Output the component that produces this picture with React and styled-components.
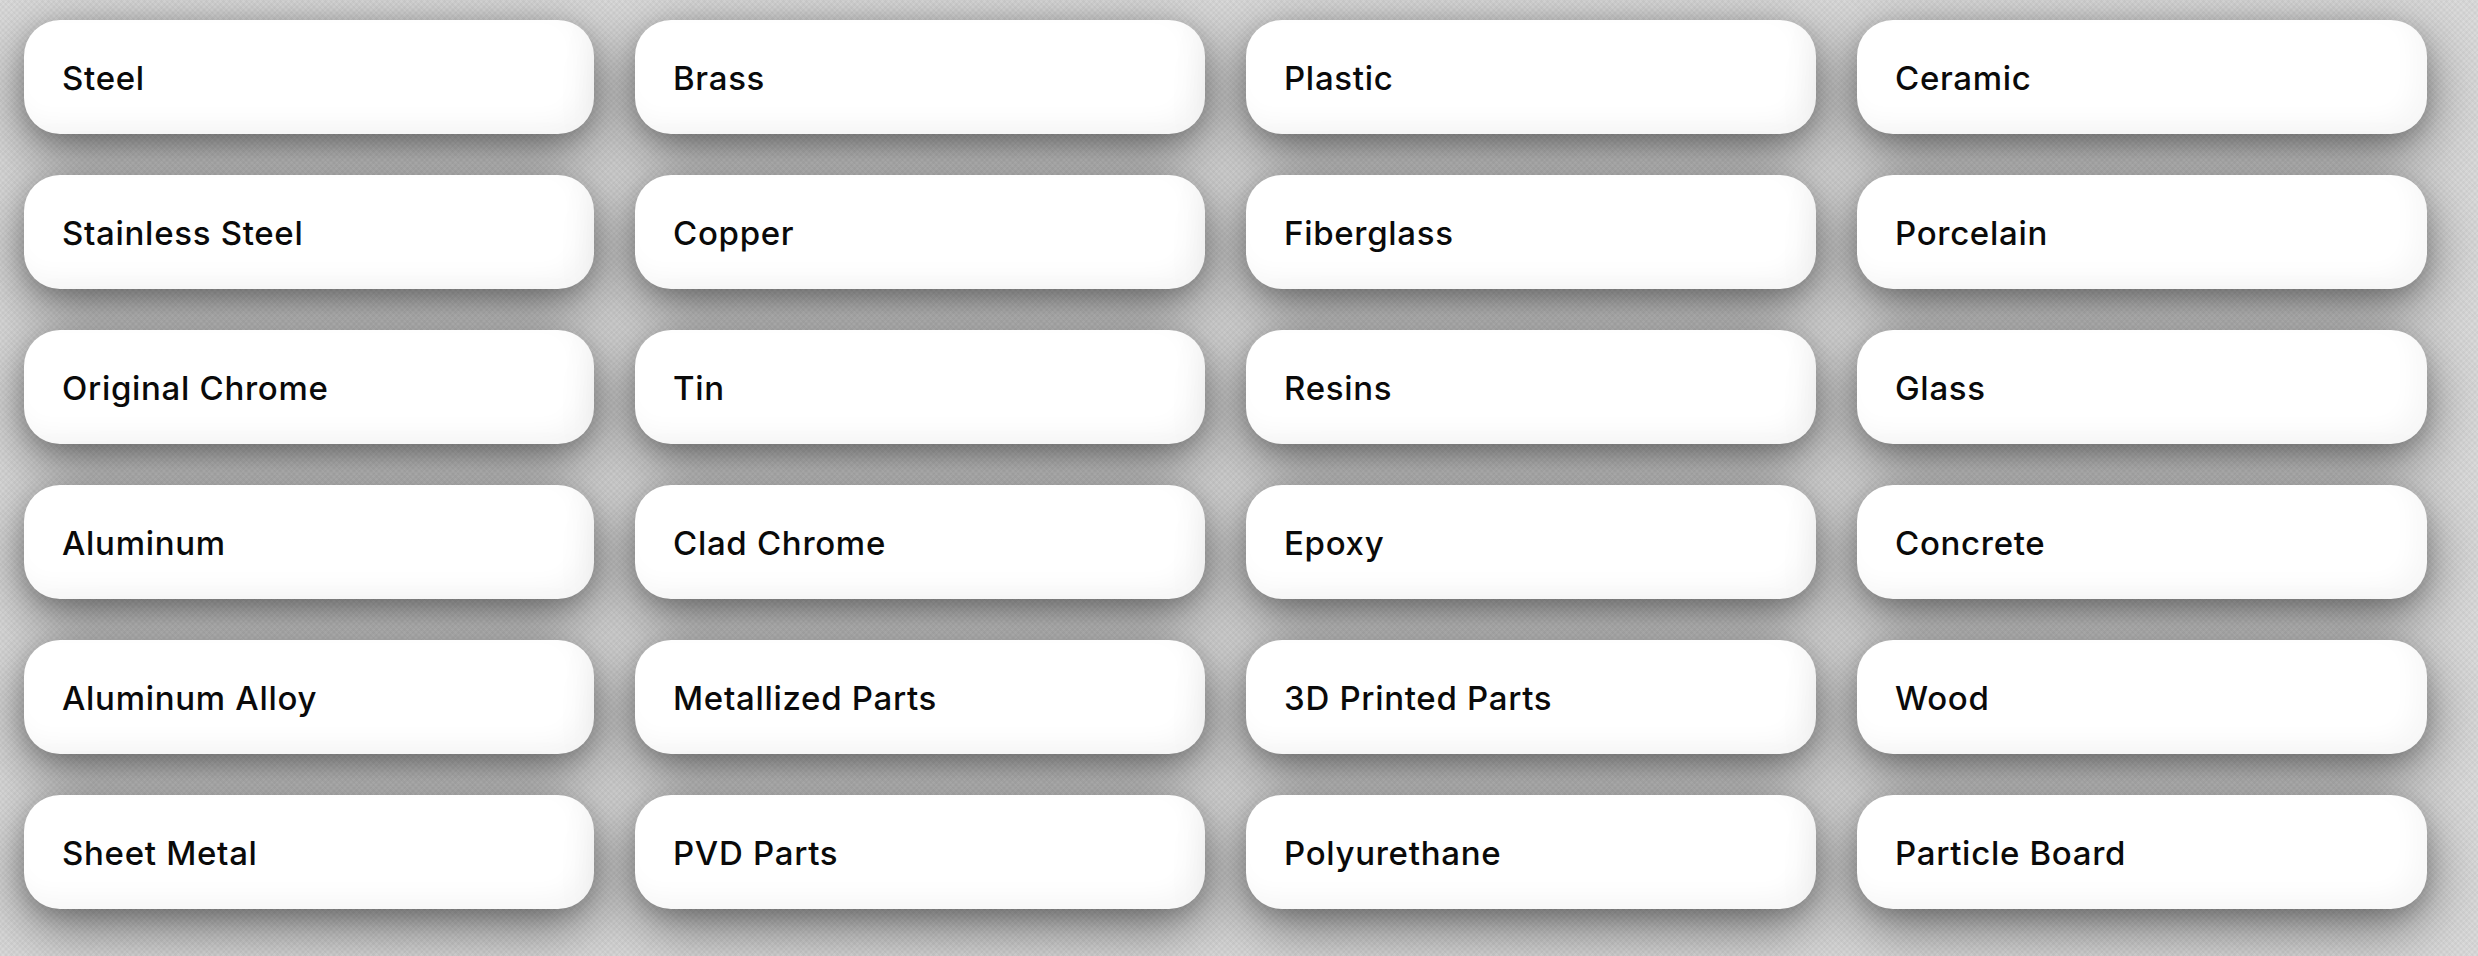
import React from "react";
import styled, { createGlobalStyle } from "styled-components";

const Global = createGlobalStyle`
  html, body {
    margin: 0;
    padding: 0;
    width: 2478px;
    height: 956px;
    overflow: hidden;
  }
  body {
    background-color: #dcdcdc;
    background-image:
      repeating-linear-gradient(45deg, rgba(0,0,0,0.028) 0 2px, transparent 2px 4px),
      repeating-linear-gradient(-45deg, rgba(0,0,0,0.028) 0 2px, transparent 2px 4px);
    font-family: Inter, "Noto Sans", sans-serif;
  }
`;

const Page = styled.div`
  box-sizing: border-box;
  width: 2478px;
  height: 956px;
  padding: 20px 51px 0 24px;
`;

const Grid = styled.div`
  display: grid;
  grid-template-columns: repeat(4, 570px);
  grid-auto-rows: 114px;
  column-gap: 41px;
  row-gap: 41px;
`;

const Card = styled.div`
  box-sizing: border-box;
  display: flex;
  align-items: center;
  padding: 3px 0 0 38px;
  border-radius: 36px;
  background: #ffffff;
  box-shadow:
    inset -12px -12px 24px rgba(0, 0, 0, 0.035),
    0 18px 60px rgba(0, 0, 0, 0.5),
    0 6px 20px rgba(0, 0, 0, 0.14);
`;

const Label = styled.span`
  font-family: Inter, "Noto Sans", sans-serif;
  font-weight: 500;
  font-size: 33px;
  letter-spacing: 0.7px;
  color: #0a0a0a;
  line-height: 1;
`;

const items = [
  "Steel", "Brass", "Plastic", "Ceramic",
  "Stainless Steel", "Copper", "Fiberglass", "Porcelain",
  "Original Chrome", "Tin", "Resins", "Glass",
  "Aluminum", "Clad Chrome", "Epoxy", "Concrete",
  "Aluminum Alloy", "Metallized Parts", "3D Printed Parts", "Wood",
  "Sheet Metal", "PVD Parts", "Polyurethane", "Particle Board",
];

export default function App() {
  return (
    <>
      <Global />
      <Page>
        <Grid>
          {items.map((t) => (
            <Card key={t}>
              <Label>{t}</Label>
            </Card>
          ))}
        </Grid>
      </Page>
    </>
  );
}
